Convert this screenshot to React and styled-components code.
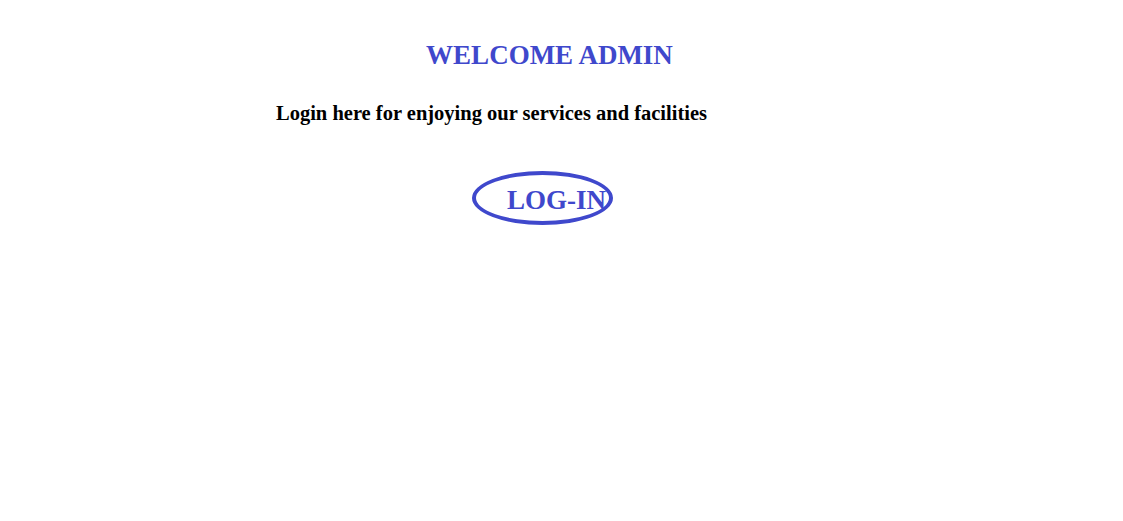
import React from 'react';
import styled, { createGlobalStyle } from 'styled-components';

const GlobalStyle = createGlobalStyle`
  html, body {
    margin: 0;
    padding: 0;
    background: #ffffff;
  }
  body {
    font-family: "Liberation Serif", "Times New Roman", serif;
  }
`;

const Page = styled.div`
  width: 1123px;
  height: 521px;
  display: flex;
  flex-direction: column;
  align-items: flex-start;
`;

const Title = styled.h2`
  width: 100%;
  box-sizing: border-box;
  margin: 38px 0 0;
  padding-right: 24px;
  text-align: center;
  font-size: 27px;
  line-height: 34px;
  font-weight: bold;
  color: #3f48cc;
`;

const Subtitle = styled.h3`
  margin: 29px 0 0 276px;
  font-size: 20.5px;
  line-height: 24px;
  font-weight: bold;
  color: #000000;
`;

const LoginLink = styled.a`
  margin: 46px 0 0 472px;
  width: 141px;
  height: 54px;
  box-sizing: border-box;
  border: 4px solid #3f48cc;
  border-radius: 50%;
  display: block;
  padding: 12px 0 0 31px;
  white-space: nowrap;
  font-size: 27px;
  line-height: 27px;
  font-weight: bold;
  color: #3f48cc;
  text-decoration: none;
  cursor: pointer;
`;

export default function App() {
  return (
    <Page>
      <GlobalStyle />
      <Title>WELCOME ADMIN</Title>
      <Subtitle>Login here for enjoying our services and facilities</Subtitle>
      <LoginLink>LOG-IN</LoginLink>
    </Page>
  );
}
